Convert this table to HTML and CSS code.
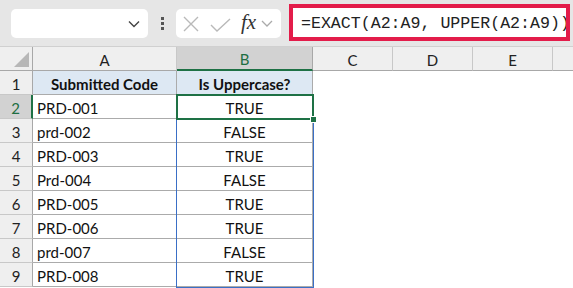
FILE: index.html
```html
<!DOCTYPE html>
<html>
<head>
<meta charset="utf-8">
<link rel="stylesheet" href="styles.css">
</head>
<body>
<div class="toolbar">
  <div class="namebox">
    <svg class="chev" width="12" height="8" viewBox="0 0 12 8"><path d="M1 1.5 L6 6.5 L11 1.5" fill="none" stroke="#444" stroke-width="1.4"/></svg>
  </div>
  <div class="dots"><span></span><span></span><span></span></div>
  <div class="fxbox">
    <svg width="16" height="16" viewBox="0 0 16 16"><path d="M1 1 L15 15 M15 1 L1 15" stroke="#b9b9b9" stroke-width="1.4" fill="none"/></svg>
    <svg width="21" height="14" viewBox="0 0 21 14"><path d="M1 7 L7 13 L20 1" stroke="#b9b9b9" stroke-width="1.4" fill="none"/></svg>
    <span class="fx">fx</span>
    <svg width="12" height="7" viewBox="0 0 12 7"><path d="M1 1 L6 6 L11 1" fill="none" stroke="#aaa" stroke-width="1.3"/></svg>
  </div>
  <div class="formula"><span>=EXACT(A2:A9, UPPER(A2:A9))</span></div>
</div>
<div class="sheet">
  <div class="corner"><div class="tri"></div></div>
  <div class="ch">A</div><div class="ch sel">B</div><div class="ch">C</div><div class="ch">D</div><div class="ch">E</div><div class="ch last"></div>

  <div class="rh">1</div><div class="c hd">Submitted Code</div><div class="c hd">Is Uppercase?</div><div class="e"></div><div class="e"></div><div class="e"></div><div class="e"></div>
  <div class="rh sel">2</div><div class="c">PRD-001</div><div class="c ctr">TRUE</div><div class="e"></div><div class="e"></div><div class="e"></div><div class="e"></div>
  <div class="rh">3</div><div class="c">prd-002</div><div class="c ctr">FALSE</div><div class="e"></div><div class="e"></div><div class="e"></div><div class="e"></div>
  <div class="rh">4</div><div class="c">PRD-003</div><div class="c ctr">TRUE</div><div class="e"></div><div class="e"></div><div class="e"></div><div class="e"></div>
  <div class="rh">5</div><div class="c">Prd-004</div><div class="c ctr">FALSE</div><div class="e"></div><div class="e"></div><div class="e"></div><div class="e"></div>
  <div class="rh">6</div><div class="c">PRD-005</div><div class="c ctr">TRUE</div><div class="e"></div><div class="e"></div><div class="e"></div><div class="e"></div>
  <div class="rh">7</div><div class="c">PRD-006</div><div class="c ctr">TRUE</div><div class="e"></div><div class="e"></div><div class="e"></div><div class="e"></div>
  <div class="rh">8</div><div class="c">prd-007</div><div class="c ctr">FALSE</div><div class="e"></div><div class="e"></div><div class="e"></div><div class="e"></div>
  <div class="rh">9</div><div class="c">PRD-008</div><div class="c ctr">TRUE</div><div class="e"></div><div class="e"></div><div class="e"></div><div class="e"></div>

  <div class="range"></div>
  <div class="active"><div class="handle"></div></div>
</div>
</body>
</html>
```
FILE: styles.css
```css
* { box-sizing: border-box; }
html, body { margin: 0; padding: 0; background: #fff; overflow: hidden; }
body { width: 573px; height: 288px; font-family: Lato, "Open Sans", sans-serif; }

.toolbar {
  height: 46px;
  background: #e6e6e6;
  display: flex;
  align-items: flex-start;
  padding: 9px 0 0 11px;
}
.namebox {
  width: 137px; height: 29px;
  background: #fff;
  border-radius: 5px;
  display: flex; align-items: center; justify-content: flex-end;
  padding-right: 8px;
}
.dots {
  width: 28px; height: 29px;
  display: flex; flex-direction: column; align-items: center; justify-content: center; gap: 2px;
}
.dots span { width: 3px; height: 3px; background: #555; display: block; }
.fxbox {
  width: 105px; height: 29px;
  background: #fff;
  border-radius: 5px;
  display: flex; align-items: center;
  padding-left: 7px;
}
.fxbox svg:nth-child(1) { margin-right: 11px; }
.fxbox svg:nth-child(2) { margin-right: 10px; margin-top: 2px; }
.fx {
  font-family: "Liberation Serif", serif;
  font-style: italic;
  font-size: 21px;
  color: #333;
  margin-right: 5px;
  margin-top: -3px;
}
.formula {
  margin-left: 8px;
  margin-top: -5px;
  width: 281px; height: 37px;
  border: 4px solid #e31c4a;
  background: #fff;
  overflow: hidden;
  white-space: nowrap;
  display: flex; align-items: center;
  padding-left: 8px;
  font-family: "Liberation Mono", monospace;
  font-size: 16.6px;
  color: #222;
}
.formula span { position: relative; top: 1px; }

.sheet {
  position: relative;
  display: grid;
  grid-template-columns: 33px 144px 136px 80px 80px 80px 20px;
  grid-template-rows: 24px repeat(9, 24px);
  border-top: 1px solid #d0d0d0;
  font-size: 15px;
  color: #111;
}
.corner {
  background: #efefef;
  border-right: 1px solid #a8a8a8;
  border-bottom: 1px solid #a8a8a8;
  position: relative;
}
.tri {
  position: absolute; right: 3px; bottom: 3px;
  width: 0; height: 0;
  border-style: solid;
  border-width: 0 0 15px 15px;
  border-color: transparent transparent #b7b7b7 transparent;
}
.ch {
  background: #efefef;
  border-right: 1px solid #c8c8c8;
  border-bottom: 1px solid #a8a8a8;
  display: flex; align-items: center; justify-content: center;
  font-size: 15px; color: #222;
  padding-top: 2px;
}
.ch.sel {
  background: #d2d2d2;
  color: #1e6e42;
  border-bottom: 2px solid #1e7145;
  border-right-color: #a8a8a8;
}
.ch.last { border-right: none; }
.rh {
  background: #efefef;
  border-right: 1px solid #a8a8a8;
  border-bottom: 1px solid #c8c8c8;
  display: flex; align-items: center; justify-content: center;
  font-size: 15px; color: #222;
  padding-top: 2px;
}
.rh.sel {
  background: #d2d2d2;
  color: #1e6e42;
  border-right: 2px solid #1e7145;
}
.c {
  border-right: 1px solid #ababab;
  border-bottom: 1px solid #ababab;
  display: flex; align-items: center;
  padding-left: 4px;
  padding-top: 2px;
  white-space: nowrap;
}
.c.ctr { justify-content: center; padding-left: 0; }
.c.hd {
  background: #dde8f3;
  font-weight: bold;
  justify-content: center;
  padding-left: 0;
}
.e { background: #fff; }

.range {
  position: absolute;
  left: 176px; top: 48px;
  width: 138px; height: 193px;
  border: 1.5px solid #3a6fc6;
  pointer-events: none;
}
.active {
  position: absolute;
  left: 176px; top: 47px;
  width: 138px; height: 26px;
  border: 2px solid #1e7145;
}
.handle {
  position: absolute;
  right: -5px; bottom: -5px;
  width: 7px; height: 7px;
  background: #1e7145;
  border: 1px solid #fff;
}
```
